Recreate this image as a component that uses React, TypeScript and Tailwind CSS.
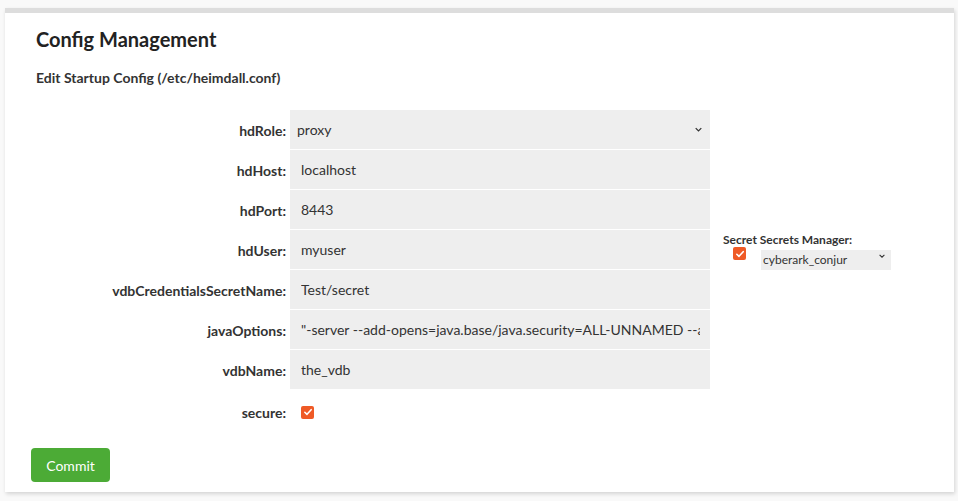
import { useState } from "react";

const FIELDS = [
  { key: "hdHost", value: "localhost" },
  { key: "hdPort", value: "8443" },
  { key: "hdUser", value: "myuser" },
  { key: "vdbCredentialsSecretName", value: "Test/secret" },
  {
    key: "javaOptions",
    value:
      '"-server --add-opens=java.base/java.security=ALL-UNNAMED --add-opens=java.base/java.lang=ALL-UNNAMED -Xmx2g"',
  },
  { key: "vdbName", value: "the_vdb" },
];

function Check({ checked, onToggle }: { checked: boolean; onToggle: () => void }) {
  return (
    <button
      type="button"
      onClick={onToggle}
      className={`w-[13px] h-[13px] rounded-[2px] flex items-center justify-center ${
        checked ? "bg-[#ef5a26]" : "bg-white border border-[#999]"
      }`}
    >
      {checked && (
        <svg viewBox="0 0 12 12" className="w-[10px] h-[10px]">
          <path d="M2.2 6.3 L4.8 8.8 L9.8 3.2" fill="none" stroke="white" strokeWidth="1.9" strokeLinecap="round" strokeLinejoin="round" />
        </svg>
      )}
    </button>
  );
}

function Chevron({ className }: { className: string }) {
  return (
    <svg viewBox="0 0 10 6" className={className}>
      <path d="M1 1 L5 5 L9 1" fill="none" stroke="#333" strokeWidth="1.8" />
    </svg>
  );
}

export default function App() {
  const [secure, setSecure] = useState(true);
  const [useSecret, setUseSecret] = useState(true);

  return (
    <div className="min-h-screen bg-[#f9f9f9] pt-[8px] pl-[5px] text-[#333]" style={{ fontFamily: "Lato, 'Open Sans', sans-serif" }}>
      <div className="w-[949px] bg-white border-t-[5px] border-[#dddddd] shadow-[1px_2px_4px_rgba(0,0,0,0.15)] pb-[10px]">
        <h2 className="pl-[31px] pt-[11px] text-[20px] font-bold text-[#222] leading-[30px]">Config Management</h2>
        <h3 className="pl-[31px] mt-[14px] text-[14px] font-bold text-[#333] leading-[20px]">Edit Startup Config (/etc/heimdall.conf)</h3>

        <div className="mt-[22px] flex flex-col">
          <div className="flex items-center h-[40px]">
            <label className="w-[281px] text-right text-[14px] font-bold">hdRole:</label>
            <div className="relative ml-[4px] w-[420px] h-[39px] mb-[1px]">
              <select
                defaultValue="proxy"
                className="appearance-none w-full h-full bg-[#eeeeee] pl-[7px] text-[14px] text-[#333] outline-none"
              >
                <option value="proxy">proxy</option>
                <option value="server">server</option>
              </select>
              <Chevron className="absolute right-[8px] top-[17px] w-[7px] h-[5px] pointer-events-none" />
            </div>
          </div>

          {FIELDS.map((f) => (
            <div key={f.key} className="flex items-center h-[40px]">
              <label className="w-[281px] text-right text-[14px] font-bold">{f.key}:</label>
              <input
                readOnly
                defaultValue={f.value}
                className="ml-[4px] w-[420px] h-[39px] mb-[1px] bg-[#eeeeee] pl-[11px] pr-[10px] text-[14px] text-[#333] outline-none"
              />
              {f.key === "hdUser" && (
                <div className="ml-[13px] self-start mt-[4px] flex flex-col">
                  <div className="text-[12px] font-bold leading-[12px] whitespace-nowrap">Secret Secrets Manager:</div>
                  <div className="flex items-start">
                    <div className="w-[38px] pl-[10px] pt-[1px] flex">
                      <Check checked={useSecret} onToggle={() => setUseSecret(!useSecret)} />
                    </div>
                    <div className="relative w-[130px] h-[20px]">
                      <select
                        defaultValue="cyberark_conjur"
                        className="appearance-none w-full h-full bg-[#eeeeee] pl-[2px] text-[12px] text-[#333] outline-none"
                      >
                        <option value="cyberark_conjur">cyberark_conjur</option>
                        <option value="aws">aws_secrets_manager</option>
                      </select>
                      <Chevron className="absolute right-[6px] top-[8px] w-[6px] h-[4px] pointer-events-none" />
                    </div>
                  </div>
                </div>
              )}
            </div>
          ))}

          <div className="flex items-center h-[44px]">
            <label className="w-[281px] text-right text-[14px] font-bold">secure:</label>
            <div className="ml-[15px]">
              <Check checked={secure} onToggle={() => setSecure(!secure)} />
            </div>
          </div>
        </div>

        <button
          type="button"
          className="ml-[26px] mt-[14px] w-[79px] h-[34px] rounded-[4px] bg-[#4cab36] text-white text-[14px]"
        >
          Commit
        </button>
      </div>
    </div>
  );
}
